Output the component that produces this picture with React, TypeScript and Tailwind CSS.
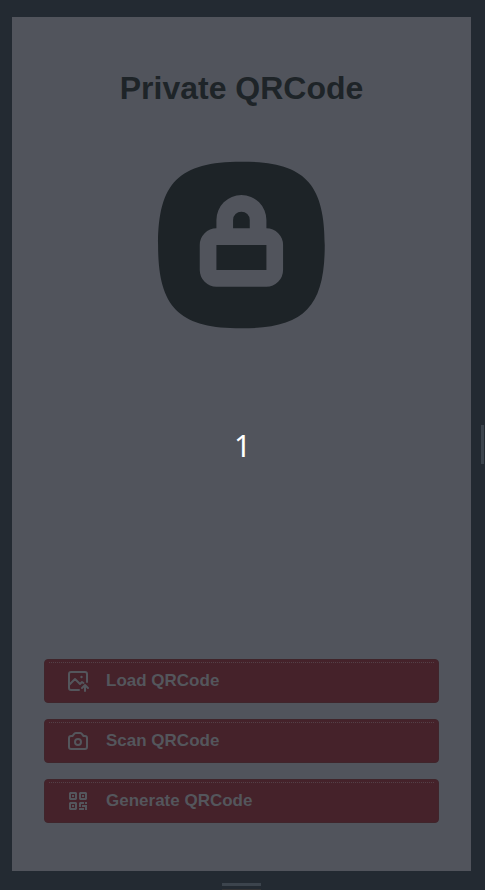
import type { ReactNode } from 'react';

function LockBadge() {
  return (
    <svg width="200" height="200" viewBox="-0.05 0 24 24" className="text-[#1d2327]" fill="currentColor" fillRule="evenodd">
      <path d="M12 2C4.500 2 2 4.500 2 12s2.500 10 10 10 10-2.500 10-10S19.500 2 12 2ZM9 10V9a3 3 0 0 1 6 0v1a2 2 0 0 1 2 2v3a2 2 0 0 1-2 2H9a2 2 0 0 1-2-2v-3a2 2 0 0 1 2-2ZM11 10V9a1 1 0 0 1 2 0v1ZM9 12h6v3H9Z" />
    </svg>
  );
}

const stroke = { fill: 'none', stroke: 'currentColor', strokeWidth: 2, strokeLinecap: 'round', strokeLinejoin: 'round' } as const;

function ImageUpIcon() {
  return (
    <svg width="24" height="24" viewBox="0 0 24 24" {...stroke}>
      <path d="M13 21H5a2 2 0 0 1-2-2V5a2 2 0 0 1 2-2h14a2 2 0 0 1 2 2v8M3.500 15.500 9 10l5 5 2-2 1.500 1M19 22v-6M16 19l3-3 3 3" />
      <circle cx="15.500" cy="8" r="1.200" fill="currentColor" stroke="none" />
    </svg>
  );
}

function CameraIcon() {
  return (
    <svg width="24" height="24" viewBox="0 0 24 24" {...stroke}>
      <path d="M3 9a2 2 0 0 1 2-2h1.500L8 5.200A2 2 0 0 1 9.800 4h4.400A2 2 0 0 1 16 5.200L17.500 7H19a2 2 0 0 1 2 2v9a2 2 0 0 1-2 2H5a2 2 0 0 1-2-2Z" />
      <circle cx="12" cy="13" r="3" />
    </svg>
  );
}

function QrIcon() {
  return (
    <svg width="24" height="24" viewBox="0 0 24 24" fill="currentColor" fillRule="evenodd">
      <path d="M4 3h6l1 1v6l-1 1H4l-1-1V4Zm1 2v4h4V5ZM14 3h6l1 1v6l-1 1h-6l-1-1V4Zm1 2v4h4V5ZM4 13h6l1 1v6l-1 1H4l-1-1v-6Zm1 2v4h4v-4ZM6 6h2v2H6ZM16 6h2v2h-2ZM6 16h2v2H6ZM14 13h4v2h-3v3h-2v-4ZM19 13h2v2h-2ZM16 16h5v5h-2v-3h-3ZM13 19h5v2h-5Z" />
    </svg>
  );
}

function ActionButton({ icon, label }: { icon: ReactNode; label: string }) {
  return (
    <button className="relative flex h-11 w-full items-center rounded border border-[#40252b] bg-[#45222a] pl-[21px] text-[#54565c]">
      <span className="absolute inset-x-1 top-[2px] border-t border-dotted border-[#544047]" />
      {icon}
      <span className="ml-4 text-[17px] leading-6 font-bold">{label}</span>
    </button>
  );
}

export default function App() {
  return (
    <div className="relative h-[890px] w-[485px] overflow-hidden bg-[#232a32] pt-[17px] pl-3 font-['Liberation_Sans',Arial,sans-serif]">
      <main className="flex h-[854px] w-[459px] flex-col items-center bg-[#51545c] px-8 pt-[47px] pb-12">
        <h1 className="text-[32px] leading-12 font-bold text-[#1e2428]">Private QRCode</h1>
        <div className="mt-[33px] pr-px">
          <LockBadge />
        </div>
        <div className="mt-auto flex w-full flex-col gap-4">
          <ActionButton icon={<ImageUpIcon />} label="Load QRCode" />
          <ActionButton icon={<CameraIcon />} label="Scan QRCode" />
          <ActionButton icon={<QrIcon />} label="Generate QRCode" />
        </div>
      </main>
      <div className="pointer-events-none absolute inset-0 flex items-center justify-center pt-px font-['Noto_Sans',sans-serif] text-[30px] leading-none text-white">1</div>
      <span className="absolute top-[425px] right-[1px] h-[39px] w-[3px] bg-[#3c444d]" />
      <span className="absolute bottom-[4px] left-[222px] h-[3px] w-[39px] bg-[#3c444d]" />
      <span className="absolute bottom-0 left-[222px] h-px w-[39px] bg-[#343436]" />
    </div>
  );
}
